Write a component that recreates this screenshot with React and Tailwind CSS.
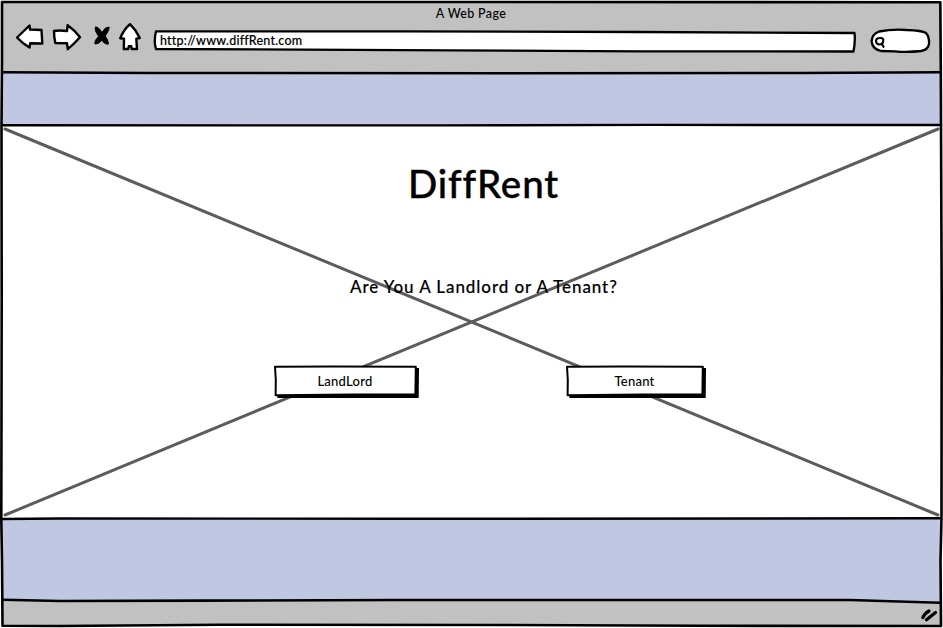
import React from "react";

const ink = {
  fill: "none",
  stroke: "#000",
  strokeWidth: 2.6,
  strokeLinecap: "round",
  strokeLinejoin: "round",
};

function NavIcons() {
  return (
    <svg className="block h-[32px] w-[130px] shrink-0" viewBox="14 21 130 32" {...ink} strokeWidth={2.4}>
      <path fill="#fff" d="M17 37.5 L29.5 25.5 L30 29.5 L41.5 30 L42.3 43.5 L30.2 43.3 L29.5 47.5 Q22 43 17 37.5Z" />
      <path fill="#fff" d="M54 31 Q59 30 67 31 L67.6 25.3 Q75 30.5 80 37.3 Q74 44 67.8 49.2 L67 43.3 L55.3 43 Q54 37 54 31Z" />
      <path strokeWidth="1" fill="#000" d="M95.5 27.2 Q98.5 26.3 101.8 32.6 Q105 26.8 109 27 Q110 29 105.2 36 Q109 42 108.2 44.2 Q105 45 101.8 40.3 Q98.5 44.5 95 44 Q93.8 41.5 98.6 36.3 Q93.8 29.5 95.5 27.2Z" />
      <path fill="#fff" d="M130 24.2 Q136 30 139.8 38 L136.3 38.6 L137 49 L131.8 49 L131.2 46.3 L128.8 46.3 L128.3 49 L123.8 49 L124 38.8 L120.2 38.2 Q124 29 130 24.2Z" />
    </svg>
  );
}

function AddressBar() {
  return (
    <div className="relative ml-[9px] h-[24px] w-[704px] shrink-0">
      <svg className="absolute inset-0 h-full w-full" viewBox="153 29 704 24" {...ink} strokeWidth={2.3}>
        <path fill="#fff" d="M156 31.3 L400 31.3 L640 32 L854.5 33 Q855.5 41 853.5 51.5 L640 51.3 L450 50.3 L300 49.6 L156 49 Q153.5 42 156 31.3Z" />
      </svg>
      <span className="relative block pl-[7px] text-[12.5px] leading-[23px] tracking-[0.2px] [-webkit-text-stroke:0.15px_black]">http://www.diffRent.com</span>
    </div>
  );
}

function SearchBox() {
  return (
    <svg className="ml-[13px] block h-[28px] w-[62px] shrink-0" viewBox="870 27 62 28" {...ink} strokeWidth={2.3}>
      <path fill="#fff" d="M879 31.5 Q892 29 907 30 Q922 30.5 926 33 Q929.5 37 929 44 Q928 50 921 51 Q907 52.5 895 51.3 L881 51 Q872.5 49 871.6 41.5 Q872 34 879 31.5Z" />
      <path strokeWidth="2.1" d="M879.5 38 Q884 37.5 883.2 41.3 Q883 44.5 879 44.5 Q875.5 43.5 876 40.5 Q876.5 38 879.5 38Z M881.8 43.5 L883.5 46.8" />
    </svg>
  );
}

function SketchButton({ children, wide }) {
  return (
    <button className={wide ? "relative h-[34px] w-[146px] text-[13px]" : "relative h-[34px] w-[141px] text-[13px]"}>
      <svg className="absolute inset-0 h-full w-full" viewBox={wide ? "0.6 0 146 34" : "0.6 0 141 34"}>
        {wide ? (
          <>
            <path d="M4 6 L143 4 L145.6 4 L145.3 34 L4 34Z" />
            <path {...ink} strokeWidth="2" fill="#fff" d="M1.6 2.8 L60 2.4 L142.4 2.8 L142 30.6 L80 30.4 L2.2 31.2 L2.4 16Z" />
          </>
        ) : (
          <>
            <path d="M4 6 L138 4 L140.6 4 L140.3 34 L4 34Z" />
            <path {...ink} strokeWidth="2" fill="#fff" d="M1.6 2.8 L58 2.4 L137.4 2.8 L137 30.6 L78 30.4 L2.2 31.2 L2.4 16Z" />
          </>
        )}
      </svg>
      <span className="relative block pr-[4px] leading-[33px] tracking-[0.25px]">{children}</span>
    </button>
  );
}

function Frame() {
  return (
    <svg className="pointer-events-none absolute inset-0 h-full w-full" viewBox="0 0 943 628" {...ink}>
      <path d="M2 2 L500 2 L940.3 2.2 L940.8 70 L941 125 L941.7 300 L941.5 518 L940.5 560 L941 626 L700 625.8 L500 625 L220 624.7 L60 626 L2.5 625.8 L2 560 L1.3 520 L1.7 300 L1.5 126 L2 60Z" />
      <path d="M3 72.2 L150 73 L500 73.2 L800 73 L940 72.2" />
      <path strokeWidth="2.4" d="M2 125.3 L440 125.4 L650 124.9 L941 125" />
      <path strokeWidth="2.4" d="M2 519 L60 518.5 L400 518.8 L941 518.3" />
      <path d="M3 599.8 L60 601 L200 600.6 L400 600 L850 600 L940 602.8" />
      <path strokeWidth="3.2" d="M922.8 617.5 Q925 613 929 611 M926.5 619.8 L935.5 612.5" />
    </svg>
  );
}

export default function App() {
  return (
    <div className="relative flex h-[628px] w-[943px] flex-col overflow-hidden bg-white pb-[2px] pl-[2px] pr-[2px] pt-[1px] font-['Lato',sans-serif] font-medium text-black">
      <header className="h-[72px] shrink-0 bg-[#c1c1c1]">
        <h1 className="pr-[1px] pt-[3px] text-center text-[12.5px] font-medium leading-[20px] tracking-[0.35px]">A Web Page</h1>
        <div className="-mt-[5px] flex items-center pl-[12px]">
          <NavIcons />
          <div className="flex items-center pt-[8px]">
            <AddressBar />
            <SearchBox />
          </div>
        </div>
      </header>
      <div className="h-[52px] shrink-0 bg-[#c0c7e3]" />
      <main className="relative h-[393px] shrink-0 bg-white">
        <svg className="absolute inset-0 h-full w-full" viewBox="2 125 939 393" fill="none" stroke="#5c5c5c" strokeWidth="3" strokeLinecap="round">
          <path d="M5 129 L938 515 M938 129 L5 515" />
        </svg>
        <div className="relative flex flex-col">
          <h2 className="pl-[406px] pt-[33px] text-[38.5px] font-medium leading-[50px] tracking-[0.9px] [-webkit-text-stroke:0.4px_black]">DiffRent</h2>
          <p className="pl-[348px] pt-[67px] text-[17px] leading-[24px] tracking-[0.92px] [-webkit-text-stroke:0.15px_black]">Are You A Landlord or A Tenant?</p>
          <div className="flex gap-[146px] pl-[272px] pt-[65px]">
            <SketchButton wide>LandLord</SketchButton>
            <SketchButton>Tenant</SketchButton>
          </div>
        </div>
      </main>
      <div className="h-[83px] shrink-0 bg-[#c0c7e3]" />
      <footer className="h-[25px] shrink-0 bg-[#c1c1c1]" />
      <Frame />
    </div>
  );
}
